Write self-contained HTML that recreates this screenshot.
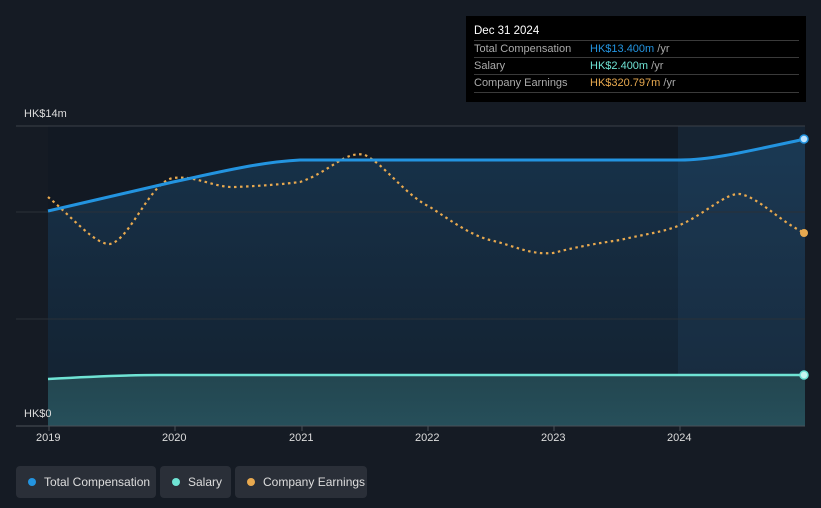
<!DOCTYPE html>
<html><head><meta charset="utf-8"><style>
body{margin:0;width:821px;height:508px;background:#151b24;font-family:"Liberation Sans",sans-serif;overflow:hidden;position:relative}
.tt{position:absolute;left:466px;top:16px;width:340px;height:86px;background:#000;color:#fff;font-size:11px}
.tt .h{position:absolute;left:8px;top:9px;font-size:11.5px}
.tt .r{position:absolute;left:8px;width:325px;height:17px;border-top:1px solid #3a3a3a;line-height:17px;color:#aaa}
.tt .r span{position:absolute;left:116px}
.lg{position:absolute;top:466px;height:32px;background:#2a2f38;border-radius:4px;color:#ddd;font-size:12px;line-height:32px}
.lg i{position:absolute;left:12px;top:12px;width:8px;height:8px;border-radius:50%}
.lg b{font-weight:normal;position:absolute;left:28px}
.ax{position:absolute;color:#ddd;font-size:11px}
</style></head><body>
<svg width="821" height="508" style="position:absolute;left:0;top:0">
<defs>
<linearGradient id="g1" x1="0" y1="0" x2="0" y2="1"><stop offset="0" stop-color="#17324a"/><stop offset="1" stop-color="#13202e"/></linearGradient>
<linearGradient id="g2" x1="0" y1="0" x2="0" y2="1"><stop offset="0" stop-color="#234650"/><stop offset="1" stop-color="#264f5a"/></linearGradient>
</defs>
<rect x="48" y="126" width="757" height="300" fill="#121923"/>
<path d="M48,211 C100,199 140,190 173,182 C220,172 260,162 300,160 L680,160 C710,160 740,153 805,139 L805,426 L48,426Z" fill="url(#g1)"/>
<rect x="678" y="126" width="127" height="300" fill="#2a5a80" opacity="0.18"/>
<path d="M48,379 C100,376 130,375 160,375 L805,375 L805,426 L48,426Z" fill="url(#g2)"/>
<line x1="16" y1="126" x2="805" y2="126" stroke="#3a4048"/>
<line x1="16" y1="212" x2="805" y2="212" stroke="#2a3038"/>
<line x1="16" y1="319" x2="805" y2="319" stroke="#2a3038"/>
<line x1="16" y1="426" x2="805" y2="426" stroke="#4a5058"/>
<g stroke="#4a5058"><line x1="49" y1="426" x2="49" y2="431"/><line x1="175" y1="426" x2="175" y2="431"/><line x1="302" y1="426" x2="302" y2="431"/><line x1="428" y1="426" x2="428" y2="431"/><line x1="554" y1="426" x2="554" y2="431"/><line x1="680" y1="426" x2="680" y2="431"/></g>
<path d="M48,197 C70,215 95,245 110,244 C130,240 150,182 173,178 C195,175 215,188 235,187 C260,186 285,184 300,182 C330,172 345,150 365,155 C385,165 405,195 430,207 C450,220 470,235 490,240 C515,246 530,255 553,253 C580,246 600,243 620,240 C645,234 665,232 680,225 C705,214 725,193 740,194 C760,198 780,222 805,233" fill="none" stroke="#e8a94f" stroke-width="2.2" stroke-dasharray="2.5,3.5"/>
<path d="M48,211 C100,199 140,190 173,182 C220,172 260,162 300,160 L680,160 C710,160 740,153 805,139" fill="none" stroke="#2394e0" stroke-width="3"/>
<path d="M48,379 C100,376 130,375 160,375 L805,375" fill="none" stroke="#6fe3d4" stroke-width="2.5"/>
<circle cx="804" cy="139" r="4" fill="#bfe4ff" stroke="#2394e0" stroke-width="1.5"/>
<circle cx="804" cy="375" r="4" fill="#c8f5ef" stroke="#6fe3d4" stroke-width="1.5"/>
<circle cx="804" cy="233" r="4" fill="#e8a94f"/>
</svg>
<div class="ax" style="left:24px;top:108px">HK$14m</div>
<div class="ax" style="left:24px;top:408px">HK$0</div>
<div class="ax" style="left:36px;top:432px">2019</div>
<div class="ax" style="left:162px;top:432px">2020</div>
<div class="ax" style="left:289px;top:432px">2021</div>
<div class="ax" style="left:415px;top:432px">2022</div>
<div class="ax" style="left:541px;top:432px">2023</div>
<div class="ax" style="left:667px;top:432px">2024</div>
<div class="tt"><div class="h">Dec 31 2024</div>
<div class="r" style="top:24px">Total Compensation<span><font color="#2394e0">HK$13.400m</font> /yr</span></div>
<div class="r" style="top:41px">Salary<span><font color="#6fe3d4">HK$2.400m</font> /yr</span></div>
<div class="r" style="top:58px;border-bottom:1px solid #3a3a3a">Company Earnings<span><font color="#e8a94f">HK$320.797m</font> /yr</span></div>
</div>
<div class="lg" style="left:16px;width:140px"><i style="background:#2394e0"></i><b>Total Compensation</b></div>
<div class="lg" style="left:160px;width:71px"><i style="background:#6fe3d4"></i><b>Salary</b></div>
<div class="lg" style="left:235px;width:132px"><i style="background:#e8a94f"></i><b>Company Earnings</b></div>
</body></html>
